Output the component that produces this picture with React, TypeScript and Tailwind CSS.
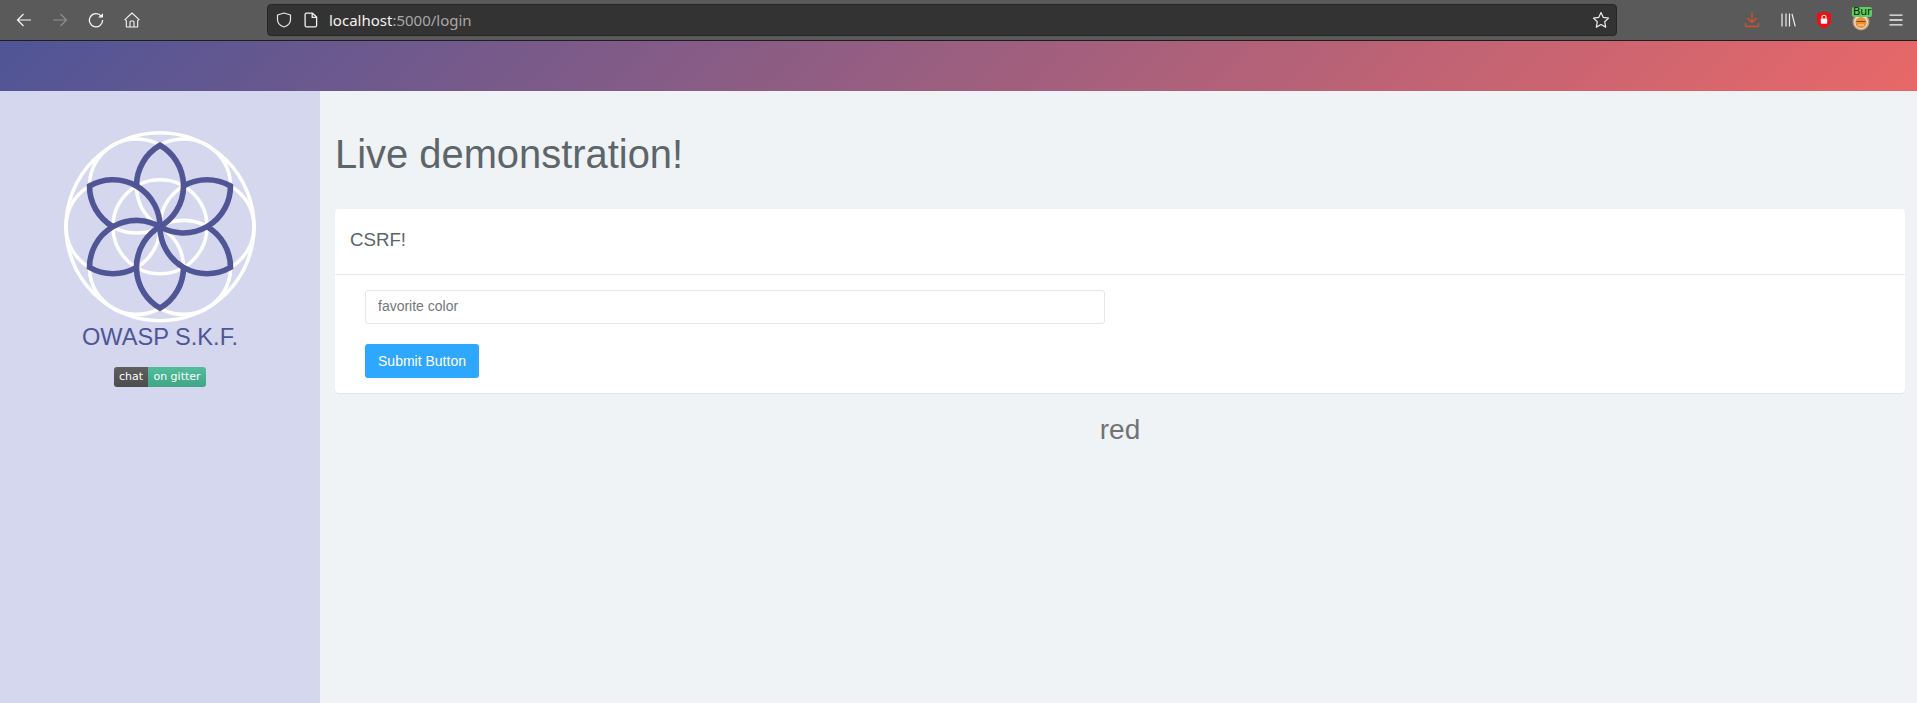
import React from "react";

const Back = () => (
  <svg width="16" height="16" viewBox="0 0 16 16" fill="none" stroke="currentColor" strokeWidth="1.2">
    <path d="M1.5 8H15M7.5 2L1.5 8L7.5 14" />
  </svg>
);
const Forward = () => (
  <svg width="16" height="16" viewBox="0 0 16 16" fill="none" stroke="currentColor" strokeWidth="1.2">
    <path d="M14.5 8H1M8.5 2L14.5 8L8.5 14" />
  </svg>
);
const Reload = () => (
  <svg width="16" height="16" viewBox="0 0 16 16" fill="none" stroke="currentColor" strokeWidth="1.3">
    <path d="M13.2 4.2A6.6 6.6 0 1 0 14.6 8" />
    <path d="M10 5.4L15 1.2V5.6Z" fill="currentColor" stroke="none" />
  </svg>
);
const Home = () => (
  <svg width="16" height="16" viewBox="0 0 16 16" fill="none" stroke="currentColor" strokeWidth="1.1">
    <path d="M8 1L0.9 7.6L2.3 8.5V14.5A0.7 0.7 0 0 0 3 15H13A0.7 0.7 0 0 0 13.7 14.5V8.5L15.1 7.6Z" strokeLinejoin="round" />
    <path d="M6 15V10A1 1 0 0 1 7 9H9A1 1 0 0 1 10 10V15" />
  </svg>
);
const Shield = () => (
  <svg width="16" height="16" viewBox="0 0 16 16" fill="none" stroke="#e8e8e8" strokeWidth="1.2">
    <path d="M8 1L14.5 3V7.5C14.5 11 11.8 13.8 8 15C4.2 13.8 1.5 11 1.5 7.5V3Z" strokeLinejoin="round" />
  </svg>
);
const FileIcon = () => (
  <svg width="14" height="16" viewBox="0 0 14 16" fill="none" stroke="#f2f2f2" strokeWidth="1.3">
    <path d="M2.5 1.2H8.5L12.6 5V13.3A1.4 1.4 0 0 1 11.2 14.8H2.5A1.4 1.4 0 0 1 1.1 13.3V2.6A1.4 1.4 0 0 1 2.5 1.2Z" strokeLinejoin="round" />
    <path d="M8.2 1.2V5.3H12.6" />
  </svg>
);
const Star = () => (
  <svg width="18" height="18" viewBox="0 0 18 18" fill="none" stroke="#ececec" strokeWidth="1.2">
    <path d="M9 1.5L11.3 6.4L16.6 7.1L12.7 10.8L13.7 16.1L9 13.5L4.3 16.1L5.3 10.8L1.4 7.1L6.7 6.4Z" strokeLinejoin="round" />
  </svg>
);
const Download = () => (
  <svg width="16" height="16" viewBox="0 0 16 16" fill="none" stroke="#d5502c" strokeWidth="1.3">
    <path d="M8 0.5V10.5M3.5 6L8 10.5L12.5 6" />
    <path d="M1.5 11V13.2A1.3 1.3 0 0 0 2.8 14.5H13.2A1.3 1.3 0 0 0 14.5 13.2V11" />
  </svg>
);
const Library = () => (
  <svg width="16" height="16" viewBox="0 0 16 16" fill="none" stroke="#f0f0f0" strokeWidth="1.2">
    <path d="M2 1.5V14.5M6 1.5V14.5M9.5 1.5V14.5M12 1.8L15.2 14.3" />
  </svg>
);
const RedShield = () => (
  <svg width="16" height="18" viewBox="0 0 16 18">
    <path d="M8 0.5L15 2.7V9C15 13 12 16 8 17.5C4 16 1 13 1 9V2.7Z" fill="#ee0e14" />
    <rect x="4.8" y="7.6" width="6.4" height="5.2" rx="0.7" fill="#fff" />
    <path d="M6 7.6V6.2A2 2 0 0 1 10 6.2V7.6" fill="none" stroke="#fff" strokeWidth="1.1" />
  </svg>
);
const Menu = () => (
  <svg width="14" height="12" viewBox="0 0 14 12" fill="none" stroke="#f4f4f4" strokeWidth="1.3">
    <path d="M0.5 1.2H13.5M0.5 6H13.5M0.5 10.8H13.5" />
  </svg>
);
const BurpAvatar = () => (
  <svg width="18" height="18" viewBox="0 0 18 18">
    <circle cx="9" cy="9" r="8.5" fill="#b89a7c" />
    <circle cx="9" cy="9" r="7" fill="#e9e2d8" />
    <circle cx="9" cy="9.5" r="5.6" fill="#ee8f32" />
    <path d="M4.5 8.5H13.5" stroke="#7b4a20" strokeWidth="1" />
    <path d="M6 12H12" stroke="#fbe0b8" strokeWidth="1" />
  </svg>
);

const Logo = () => {
  const cx = 100;
  const cy = 99.7;
  const r = 47;
  const rad = (a: number) => (a * Math.PI) / 180;
  const tip = r * Math.sqrt(3);
  return (
    <svg width="200" height="200" viewBox="0 0 200 200" fill="none">
      <g stroke="#ffffff" strokeWidth="3.6">
        <circle cx={cx} cy={cy} r={94} />
        <circle cx={cx} cy={cy} r={r} />
        {[0, 60, 120, 180, 240, 300].map((a) => (
          <circle key={a} cx={cx + r * Math.cos(rad(a))} cy={cy + r * Math.sin(rad(a))} r={r} />
        ))}
      </g>
      <g stroke="#4f5595" strokeWidth="5.6" strokeLinejoin="miter">
        {[270, 330, 30, 90, 150, 210].map((a) => {
          const tx = cx + tip * Math.cos(rad(a));
          const ty = cy + tip * Math.sin(rad(a));
          const hx = cx + r * Math.cos(rad(a - 30));
          const hy = cy + r * Math.sin(rad(a - 30));
          return <path key={a} d={`M${cx} ${cy}A${r} ${r} 0 0 0 ${tx} ${ty}A${r} ${r} 0 0 0 ${hx} ${hy}`} />;
        })}
      </g>
    </svg>
  );
};

export default function App() {
  return (
    <div className="flex min-h-[703px] flex-col font-['Liberation_Sans',sans-serif] text-[#5c6569]">
      <header className="flex h-[41px] items-center border-b border-[#1e1e1e] bg-[#5a5a5a] pl-[6px] text-[#f4f4f4]">
        <div className="flex h-[40px] w-[36px] items-center justify-center"><Back /></div>
        <div className="flex h-[40px] w-[36px] items-center justify-center text-[#8f8f8f]"><Forward /></div>
        <div className="flex h-[40px] w-[36px] items-center justify-center"><Reload /></div>
        <div className="flex h-[40px] w-[36px] items-center justify-center"><Home /></div>
        <div className="ml-[117px] flex h-[32px] w-[1350px] items-center rounded-[4px] border border-[#262626] bg-[#333333] pl-[8px] pr-[6px]">
          <Shield />
          <span className="ml-[12px]"><FileIcon /></span>
          <span className="ml-[11px] font-['Noto_Sans',sans-serif] text-[15px] text-[#f2f2f2]">
            localhost<span className="text-[#a8a8a8]">:5000/login</span>
          </span>
          <span className="ml-auto"><Star /></span>
        </div>
        <div className="ml-[117px] flex h-[40px] w-[36px] items-center justify-center"><Download /></div>
        <div className="flex h-[40px] w-[36px] items-center justify-center"><Library /></div>
        <div className="flex h-[40px] w-[36px] items-center justify-center"><RedShield /></div>
        <div className="relative flex h-[40px] w-[36px] items-center justify-center">
          <span className="ml-[1px] mt-[3px]"><BurpAvatar /></span>
          <span className="absolute left-[10px] top-[7px] flex h-[10px] w-[20px] items-center overflow-hidden rounded-[2px] bg-[#5fce5f] pl-[1px] font-['DejaVu_Sans',sans-serif] text-[11px] leading-[10px] tracking-[-0.3px] text-[#10240f]">
            Bur
          </span>
        </div>
        <div className="flex h-[40px] w-[36px] items-center justify-center"><Menu /></div>
      </header>
      <div className="h-[50px] bg-linear-[135deg,#4f5597,#e86868]" />
      <div className="flex flex-1">
        <aside className="flex w-[320px] flex-col items-center bg-[#d5d7ee] pt-[36px]">
          <Logo />
          <div className="mt-[-4px] text-[23.6px] leading-[29px] text-[#4f5595]">OWASP S.K.F.</div>
          <div className="mt-[15px] flex h-[20px] w-[92px] overflow-hidden rounded-[3px] font-['DejaVu_Sans',sans-serif] text-[11px] leading-[20px] text-white">
            <span className="w-[34px] bg-linear-to-b from-[#5f5f5f] to-[#4c4c4c] text-center">chat</span>
            <span className="flex-1 bg-linear-to-b from-[#52bd9c] to-[#3fa586] text-center">on gitter</span>
          </div>
        </aside>
        <main className="flex-1 bg-[#f0f3f6] pl-[15px] pr-[12px] pt-[39px]">
          <h1 className="text-[39.9px] font-normal leading-[48px] text-[#5c6569]">Live demonstration!</h1>
          <section className="mt-[31px] rounded-[4px] bg-white shadow-[0_1px_1px_rgba(0,0,0,0.06)]">
            <div className="flex h-[66px] items-center border-b border-[#e9ecef] px-[15px] pb-[2px] text-[18.7px]">CSRF!</div>
            <form className="px-[30px] pb-[15px] pt-[15px]">
              <input
                placeholder="favorite color"
                className="block h-[34px] w-[740px] rounded-[3px] border border-[#e4e7ea] bg-white px-[12px] pb-[2px] text-[14px] outline-none placeholder:text-[#73777b]"
              />
              <button type="button" className="mt-[20px] block h-[34px] w-[114px] rounded-[3px] bg-[#2ea8ff] text-[14px] text-white">
                Submit Button
              </button>
            </form>
          </section>
          <div className="mt-[16px] text-center text-[28px] leading-[42px] text-[#737373]">red</div>
        </main>
      </div>
    </div>
  );
}
